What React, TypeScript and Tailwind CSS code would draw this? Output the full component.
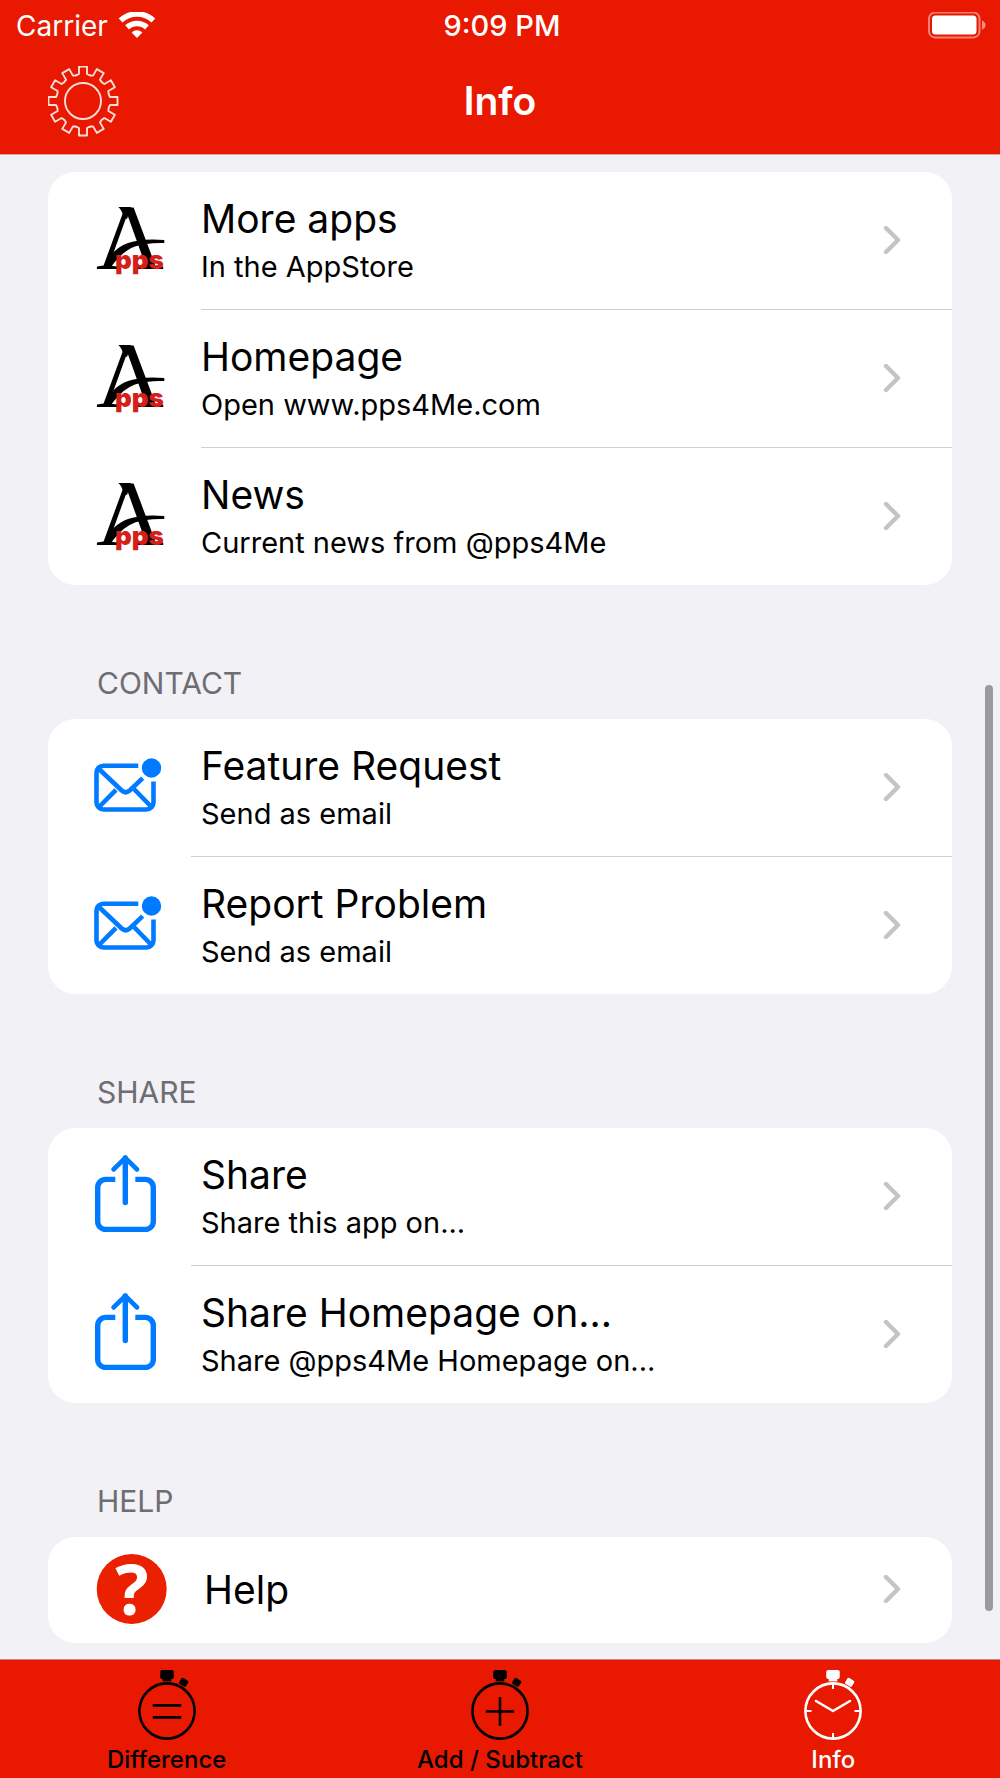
import type { ReactNode } from 'react';

type Row = { title: string; subtitle?: string };

const appRows: Row[] = [
  { title: 'More apps', subtitle: 'In the AppStore' },
  { title: 'Homepage', subtitle: 'Open www.pps4Me.com' },
  { title: 'News', subtitle: 'Current news from @pps4Me' },
];

const contactRows: Row[] = [
  { title: 'Feature Request', subtitle: 'Send as email' },
  { title: 'Report Problem', subtitle: 'Send as email' },
];

const shareRows: Row[] = [
  { title: 'Share', subtitle: 'Share this app on...' },
  { title: 'Share Homepage on...', subtitle: 'Share @pps4Me Homepage on...' },
];

// Outline of a cog: each tooth is a few points, rotated around the centre
function gearPath(teeth: number) {
  const tooth = [[-6, -26], [-4, -27], [-4, -34.5], [4, -34.5], [4, -27], [6, -26]];
  const points: string[] = [];
  for (let i = 0; i < teeth; i++) {
    const a = (i * 2 * Math.PI) / teeth;
    tooth.forEach(([x, y]) => {
      points.push(`${(x * Math.cos(a) - y * Math.sin(a)).toFixed(2)} ${(x * Math.sin(a) + y * Math.cos(a)).toFixed(2)}`);
    });
  }
  return `M${points.join('L')}Z`;
}

function GearIcon() {
  return (
    <svg viewBox="-35 -35 72 72" className="h-[72px] w-[72px]" fill="none" stroke="#fff" strokeOpacity="0.85" strokeWidth="1.9" strokeLinejoin="round" aria-hidden="true">
      <path d={gearPath(12)} />
      <circle r="18" />
    </svg>
  );
}

function WifiIcon() {
  return (
    <svg viewBox="-19 -28 38 28" className="h-7 w-[38px]" fill="none" stroke="#fff" strokeWidth="5.6" aria-hidden="true">
      <path d="M-16.4-19.5A24 24 0 0 1 16.4-19.5" />
      <path d="M-9.9-12.6A14.5 14.5 0 0 1 9.9-12.6" />
      <path d="M0-2L-5.4-7.6A7.8 7.8 0 0 1 5.4-7.6Z" fill="#fff" stroke="none" />
    </svg>
  );
}

function BatteryIcon() {
  return (
    <svg viewBox="1 1 60 28" className="h-7 w-[60px]" aria-hidden="true">
      <rect x="2" y="1.6" width="50.5" height="24.8" rx="6" fill="none" stroke="#fff" strokeOpacity="0.45" strokeWidth="2" />
      <rect x="5" y="4.6" width="44.5" height="18.8" rx="3.5" fill="#fff" />
      <path d="M55 9.5Q58.5 11 58.5 14T55 18.8Z" fill="#fff" fillOpacity="0.5" />
    </svg>
  );
}

function IconBox({ children }: { children: ReactNode }) {
  return (
    <svg viewBox="-3 1 78 80" className="h-20 w-[78px] overflow-visible" aria-hidden="true">
      {children}
    </svg>
  );
}

function AppsLogo() {
  return (
    <IconBox>
      <text x="1" y="69" fontSize="94" className="font-['Liberation_Serif',serif]">Λ</text>
      <path d="M23.3 7H36L32 19L29 18Q27 10 23.3 7Z" />
      <path d="M8 67Q18 48 33 43T69.3 40V43Q51 42.5 40 46.5T19 63L16 67Z" />
      <text x="20" y="69" fontSize="26" fill="#d41f1b" className="font-['Inter',sans-serif] font-black">pps</text>
    </IconBox>
  );
}

function MailIcon() {
  return (
    <IconBox>
      <g fill="none" stroke="#007aff" strokeWidth="4.6">
        <path d="M43.3 18.7H8.5A7 7 0 0 0 1.5 25.7V55.5A7 7 0 0 0 8.5 62.5H51.5A7 7 0 0 0 58.5 55.5V34.5" />
        <path d="M4 22L26.7 43.5Q30.7 47 34.7 43.5L47.7 31.2" />
        <path d="M21 42.8L4 60M39 42L56.5 60" />
      </g>
      <circle cx="56.5" cy="21" r="9.7" fill="#007aff" />
    </IconBox>
  );
}

function ShareIcon() {
  return (
    <IconBox>
      <g fill="none" stroke="#007aff" strokeWidth="5.4">
        <path d="M20.3 23.4H10.7A8 8 0 0 0 2.7 31.4V65.4A8 8 0 0 0 10.7 73.4H50.3A8 8 0 0 0 58.3 65.4V31.4A8 8 0 0 0 50.3 23.4H40.3" />
        <path d="M30.3 2V46.5" strokeLinecap="round" />
        <path d="M18.5 13.5L30.3 1.8L42.1 13.5" strokeWidth="4.6" strokeLinecap="round" strokeLinejoin="round" />
      </g>
    </IconBox>
  );
}

function HelpIcon() {
  return (
    <IconBox>
      <circle cx="36.7" cy="40" r="35" fill="#ea2000" />
      <text x="37" y="66" fontSize="70" textAnchor="middle" fill="#fff" className="font-['Open_Sans',sans-serif] font-bold">?</text>
    </IconBox>
  );
}

function Stopwatch({ children }: { children: ReactNode }) {
  return (
    <svg viewBox="0 0 70 74" className="h-[74px] w-[70px]" fill="none" stroke="currentColor" strokeWidth="2.6" aria-hidden="true">
      <circle cx="35" cy="44" r="27.6" />
      <g fill="currentColor" stroke="none">
        <rect x="28.2" y="3" width="13.6" height="9" rx="2" />
        <rect x="30.7" y="11" width="8.6" height="3.4" />
        <rect x="47.7" y="11.8" width="8" height="7" rx="1.5" transform="rotate(32 51.7 15.3)" />
      </g>
      {children}
    </svg>
  );
}

function Chevron() {
  return (
    <svg viewBox="0 1 18 30" className="h-[30px] w-[18px] shrink-0" fill="none" stroke="#c4c4c7" strokeWidth="4.4" strokeLinecap="round" strokeLinejoin="round" aria-hidden="true">
      <path d="M3 3L15 15L3 27" />
    </svg>
  );
}

function SectionTitle({ children }: { children: ReactNode }) {
  return (
    <h2 className="flex h-[134px] items-end px-[97px] pb-[18px] text-[30px] leading-9 text-[#6d6d72]">
      {children}
    </h2>
  );
}

function Group({ rows, icon, wideIcon = false }: { rows: Row[]; icon: ReactNode; wideIcon?: boolean }) {
  return (
    <ul className="mx-12 overflow-hidden rounded-[27px] bg-white">
      {rows.map((row) => (
        <li key={row.title} className="group">
          <button type="button" className="flex w-full items-stretch text-left">
            <span className={`flex shrink-0 items-center pl-11 ${wideIcon ? 'w-[153px]' : 'w-[143px]'}`}>{icon}</span>
            <span className={`flex flex-1 items-center border-b border-[#d0d0d3] pr-[51px] group-last:border-b-0 ${wideIcon ? '' : 'pl-[10px]'}`}>
              <span className={row.subtitle ? 'flex-1 pt-5 pb-[21px]' : 'flex-1 py-[26px] pl-[3px]'}>
                <span className="block text-[39px] leading-[54px]">{row.title}</span>
                {row.subtitle && <span className="block text-[29px] leading-[42px]">{row.subtitle}</span>}
              </span>
              <Chevron />
            </span>
          </button>
        </li>
      ))}
    </ul>
  );
}

function Tab({ label, active = false, children }: { label: string; active?: boolean; children: ReactNode }) {
  return (
    <button type="button" className={`flex flex-col items-center pt-[7px] ${active ? 'text-white' : 'text-black'}`}>
      <Stopwatch>{children}</Stopwatch>
      <span className="pt-px text-[24px] leading-9 font-medium">{label}</span>
    </button>
  );
}

export default function App() {
  return (
    <div className="flex min-h-screen flex-col bg-[#f2f1f6] font-['Inter',sans-serif] text-black">
      <header className="border-b border-[#d9a5a2] bg-[#e81900] text-white">
        <div className="grid h-[51px] grid-cols-3 items-center pr-3 pl-4 text-[29px]">
          <div className="flex items-center gap-[10px]">
            <span className="text-[28px]">Carrier</span>
            <WifiIcon />
          </div>
          <span className="text-center font-medium">9:09 PM</span>
          <div className="flex justify-end">
            <BatteryIcon />
          </div>
        </div>
        <div className="grid h-[103px] grid-cols-3 items-center px-12 pb-0.5">
          <button type="button" aria-label="Settings" className="justify-self-start">
            <GearIcon />
          </button>
          <h1 className="text-center text-[39px] font-semibold">Info</h1>
        </div>
      </header>

      <main className="relative flex-1 pt-[17px] pb-4">
        <Group rows={appRows} icon={<AppsLogo />} wideIcon />
        <SectionTitle>CONTACT</SectionTitle>
        <Group rows={contactRows} icon={<MailIcon />} />
        <SectionTitle>SHARE</SectionTitle>
        <Group rows={shareRows} icon={<ShareIcon />} />
        <SectionTitle>HELP</SectionTitle>
        <Group rows={[{ title: 'Help' }]} icon={<HelpIcon />} wideIcon />
        <div className="absolute top-[530px] right-[7px] bottom-12 w-2 rounded-full bg-[#9b9b9f]" />
      </main>

      <nav className="grid grid-cols-3 border-t border-[#b58a88] bg-[#e81900]">
        <Tab label="Difference">
          <path d="M20.8 38.4H49.2M20.8 50.4H49.2" />
        </Tab>
        <Tab label="Add / Subtract">
          <path d="M20.8 44.5H49.2M35 30.3V58.7" />
        </Tab>
        <Tab label="Info" active>
          <path d="M18 34L35 44L52 34" strokeLinecap="round" strokeLinejoin="round" />
          <path d="M35 16V22M35 66V72M7 44H13.5M56.5 44H63" strokeWidth="2" />
        </Tab>
      </nav>
    </div>
  );
}
